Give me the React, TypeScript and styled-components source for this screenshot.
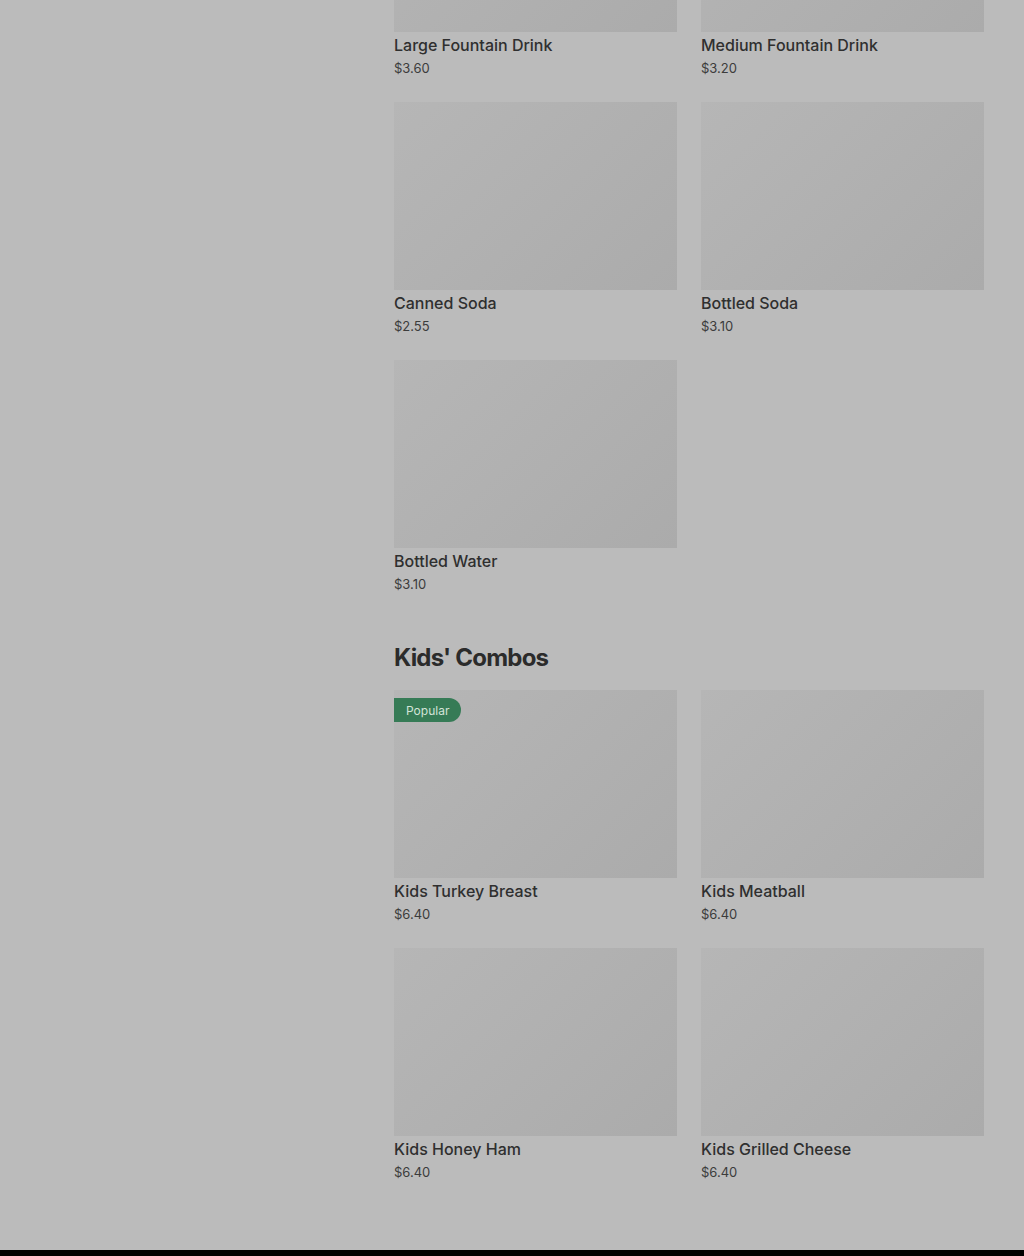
import { createGlobalStyle } from 'styled-components'
import styled from 'styled-components'

const GlobalStyle = createGlobalStyle`
	html, body {
		margin: 0;
		padding: 0;
		background: #bbbbbb;
		overflow: hidden;
	}
	body {
		font-family: Inter, 'Noto Sans', sans-serif;
		-webkit-font-smoothing: antialiased;
	}
`

interface MenuItem {
	name: string
	price: string
	popular?: boolean
}

interface MenuSection {
	title?: string
	items: MenuItem[]
}

const sections: MenuSection[] = [
	{
		items: [
			{ name: 'Large Fountain Drink', price: '$3.60' },
			{ name: 'Medium Fountain Drink', price: '$3.20' },
			{ name: 'Canned Soda', price: '$2.55' },
			{ name: 'Bottled Soda', price: '$3.10' },
			{ name: 'Bottled Water', price: '$3.10' },
		],
	},
	{
		title: "Kids' Combos",
		items: [
			{ name: 'Kids Turkey Breast', price: '$6.40', popular: true },
			{ name: 'Kids Meatball', price: '$6.40' },
			{ name: 'Kids Honey Ham', price: '$6.40' },
			{ name: 'Kids Grilled Cheese', price: '$6.40' },
		],
	},
]

export default function App() {
	return (
		<>
			<GlobalStyle />
			<Page>
				<Layout>
					<Sidebar />
					<Main>
						{sections.map((section, i) => (
							<Section key={i}>
								{section.title && <SectionTitle>{section.title}</SectionTitle>}
								<Grid>
									{section.items.map(item => (
										<Card key={item.name}>
											<Thumb>
												{item.popular && <Badge>Popular</Badge>}
											</Thumb>
											<ItemName>{item.name}</ItemName>
											<ItemPrice>{item.price}</ItemPrice>
										</Card>
									))}
								</Grid>
							</Section>
						))}
					</Main>
				</Layout>
				<Footer />
			</Page>
		</>
	)
}

const Page = styled.div`
	display: flex;
	flex-direction: column;
	height: 1256px;
	overflow: hidden;
`

// page is scrolled part way down the menu
const Layout = styled.div`
	display: flex;
	flex: 1;
	margin-top: -156px;
`

const Sidebar = styled.aside`
	width: 354px;
	flex-shrink: 0;
`

const Main = styled.main`
	flex: 1;
	padding: 0 40px;
	display: flex;
	flex-direction: column;
	gap: 49px;
`

const Section = styled.section`
	display: flex;
	flex-direction: column;
`

const SectionTitle = styled.h2`
	margin: 0 0 16px;
	font-size: 24px;
	line-height: 32px;
	font-weight: 700;
	letter-spacing: -0.8px;
	color: #2b2b2b;
`

const Grid = styled.div`
	display: grid;
	grid-template-columns: 1fr 1fr;
	column-gap: 24px;
	row-gap: 25px;
`

const Card = styled.div`
	display: flex;
	flex-direction: column;
`

const Thumb = styled.div`
	position: relative;
	height: 188px;
	background: linear-gradient(135deg, #b6b6b6 0%, #ababab 100%);
`

const Badge = styled.span`
	position: absolute;
	top: 8px;
	left: 0;
	height: 24px;
	padding: 0 12px;
	display: flex;
	align-items: center;
	background: #367b56;
	color: #d3e3d8;
	font-size: 12px;
	border-radius: 0 12px 12px 0;
`

const ItemName = styled.div`
	margin-top: 3px;
	font-size: 16px;
	line-height: 20px;
	font-weight: 500;
	color: #2f2f2f;
`

const ItemPrice = styled.div`
	margin-top: 4px;
	font-size: 13px;
	line-height: 18px;
	color: #3c3c3c;
`

const Footer = styled.footer`
	height: 6px;
	background: #000;
	flex-shrink: 0;
`
